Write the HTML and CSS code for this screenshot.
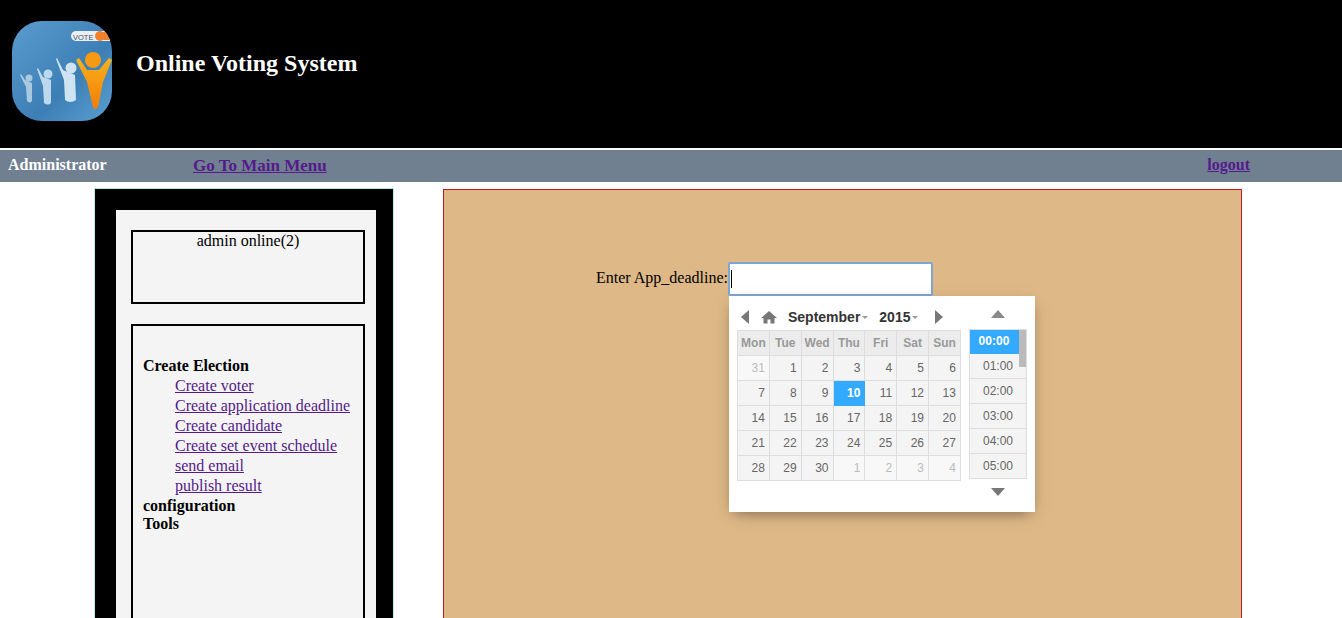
FILE: index.html
```html
<!DOCTYPE html>
<html lang="en">
<head>
<meta charset="utf-8">
<title>Online Voting System</title>
<link rel="stylesheet" href="styles.css">
</head>
<body>
<header class="banner">
  <svg class="logo" width="100" height="100" viewBox="0 0 100 100">
    <defs>
      <linearGradient id="bg" x1="0" y1="0" x2="1" y2="1"><stop offset="0" stop-color="#5a9ccd"/><stop offset="0.6" stop-color="#3d7fb5"/><stop offset="1" stop-color="#5a9fd2"/></linearGradient>
      <linearGradient id="or" x1="0" y1="0" x2="0" y2="1"><stop offset="0" stop-color="#f7b21c"/><stop offset="1" stop-color="#f57c05"/></linearGradient>
      <clipPath id="sq"><rect width="100" height="100" rx="30"/></clipPath>
    </defs>
    <g clip-path="url(#sq)">
      <rect width="100" height="100" fill="url(#bg)"/>
      <rect x="59" y="10" width="50" height="10" rx="5" fill="#e9eff3"/>
      <text x="61" y="18.5" class="logo-text">VOTE</text>
      <circle cx="88" cy="15" r="5" fill="#f0802a"/>
      <rect x="88" y="11" width="14" height="8" fill="#f0802a"/>
      <g fill="#a9c9e0"><circle cx="17" cy="57" r="3.5"/><path d="M9 53l4 6 7 3v18q-2 3-5 0l-1-14-6-12z"/></g>
      <g fill="#bdd8ea"><circle cx="36" cy="53" r="4.5"/><path d="M26 47l5 9 8 3v23q-3 3-7 0l-1-17-6-17z"/></g>
      <g fill="#cfe3f1"><circle cx="59" cy="47" r="5.5"/><path d="M45 37l6 12 12 5 1 25q-6 4-11 0l-1-20-8-21z"/></g>
      <circle cx="81" cy="39" r="8" fill="#f59a12"/>
      <path d="M64 39l3-2 8 12h12l10-12 3 2-9 22-5 25q-3 4-5 0l-6-25z" fill="url(#or)"/>
    </g>
  </svg>
  <h1 class="title">Online Voting System</h1>
</header>
<nav class="navbar">
  <b class="role">Administrator</b>
  <a class="nav-link main-link" href="#">Go To Main Menu</a>
  <a class="nav-link logout" href="#">logout</a>
</nav>
<div class="content">
  <aside class="sidebar">
    <div class="sidebar-inner">
      <div class="online-box">admin online(2)</div>
      <div class="menu-box">
        <div class="menu-head">Create Election</div>
        <ul class="menu-list">
          <li><a href="#">Create voter</a></li>
          <li><a href="#">Create application deadline</a></li>
          <li><a href="#">Create candidate</a></li>
          <li><a href="#">Create set event schedule</a></li>
          <li><a href="#">send email</a></li>
          <li><a href="#">publish result</a></li>
        </ul>
        <div class="menu-head tight">configuration</div>
        <div class="menu-head tight">Tools</div>
      </div>
    </div>
  </aside>
  <main class="panel">
    <form class="deadline-form">
      <label class="deadline-label" for="deadline">Enter App_deadline:</label>
      <div class="picker-anchor">
        <div class="deadline-input" id="deadline"><span class="caret"></span></div>
        <div class="picker">
          <div class="cal">
            <div class="cal-head">
              <svg class="ico" width="9" height="14" viewBox="0 0 9 14"><path d="M8 0v14L0 7z" fill="#777"/></svg>
              <svg class="ico home" width="16" height="14" viewBox="0 0 16 14"><path d="M8 1L0 8h2.500v5.500h4V9.500h3v4h4V8H16z" fill="#777"/></svg>
              <span class="month">September<i class="mini"></i></span>
              <span class="year">2015<i class="mini"></i></span>
              <svg class="ico next" width="9" height="14" viewBox="0 0 9 14"><path d="M1 0v14l8-7z" fill="#777"/></svg>
            </div>
            <table class="days">
              <thead><tr><th>Mon</th><th>Tue</th><th>Wed</th><th>Thu</th><th>Fri</th><th>Sat</th><th>Sun</th></tr></thead>
              <tbody>
                <tr><td class="off">31</td><td>1</td><td>2</td><td>3</td><td>4</td><td>5</td><td>6</td></tr>
                <tr><td>7</td><td>8</td><td>9</td><td class="sel">10</td><td>11</td><td>12</td><td>13</td></tr>
                <tr><td>14</td><td>15</td><td>16</td><td>17</td><td>18</td><td>19</td><td>20</td></tr>
                <tr><td>21</td><td>22</td><td>23</td><td>24</td><td>25</td><td>26</td><td>27</td></tr>
                <tr><td>28</td><td>29</td><td>30</td><td class="off">1</td><td class="off">2</td><td class="off">3</td><td class="off">4</td></tr>
              </tbody>
            </table>
          </div>
          <div class="times">
            <svg class="tri" width="14" height="8" viewBox="0 0 14 8"><path d="M7 0l7 8H0z" fill="#888"/></svg>
            <div class="time-list">
              <div class="time sel">00:00</div>
              <div class="time">01:00</div>
              <div class="time">02:00</div>
              <div class="time">03:00</div>
              <div class="time">04:00</div>
              <div class="time">05:00</div>
              <span class="thumb"></span>
            </div>
            <svg class="tri down" width="14" height="8" viewBox="0 0 14 8"><path d="M0 0h14L7 8z" fill="#777"/></svg>
          </div>
        </div>
      </div>
    </form>
  </main>
</div>
</body>
</html>
```
FILE: styles.css
```css
* { box-sizing: border-box; }
html, body { height: 618px; overflow: hidden; }
body { margin: 0; background: #fff; font-family: "Liberation Serif", "Times New Roman", serif; font-size: 16px; color: #000; }
a { color: #551a8b; }

.banner { height: 148px; background: #000; display: flex; align-items: center; padding: 0 0 6px 12px; gap: 24px; }
.logo { flex: none; margin-top: 0; }
.logo-text { font-family: "Liberation Sans", sans-serif; font-size: 7.500px; fill: #44525c; }
.title { margin: 0 0 16px; font-size: 24px; line-height: 28px; color: #fff; font-weight: bold; }

.navbar { margin-top: 2px; height: 32px; background: #708090; display: flex; align-items: flex-start; padding: 6px 92px 0 8px; font-size: 16px; line-height: 18px; }
.role { color: #fff; width: 185px; flex: none; }
.nav-link { font-weight: bold; }
.main-link { position: relative; top: 1px; font-size: 17px; }
.logout { margin-left: auto; }

.content { display: flex; align-items: flex-start; padding: 6px 100px 0 94px; }
.sidebar { width: 300px; height: 500px; flex: none; background: #000; border: 1px solid #aeeee4; border-bottom: 0; padding: 21px 17px 0 21px; }
.sidebar-inner { background: #f4f4f4; height: 480px; padding: 20px 11px 0 15px; }
.online-box { height: 74px; border: 2px solid #000; text-align: center; line-height: 18px; }
.menu-box { margin-top: 20px; height: 400px; border: 2px solid #000; padding: 30px 10px 0 10px; }
.menu-head { font-weight: bold; line-height: 20px; }
.menu-head.tight { line-height: 18px; }
.menu-list { list-style: none; margin: 0 0 1px; padding: 0 0 0 32px; line-height: 20px; }

.panel { width: 799px; height: 500px; margin: 1px 0 0 49px; flex: none; background: #deb887; border: 1px solid #c0181c; border-bottom: 0; }
.deadline-form { display: flex; align-items: flex-start; padding: 72px 0 0 152px; }
.deadline-label { line-height: 18px; margin-top: 7px; }
.picker-anchor { position: relative; }
.deadline-input { width: 205px; height: 34px; background: #fff; border: 2px solid #7ea6d3; border-radius: 2px; padding: 6px 0 0 1px; }
.caret { display: block; width: 1px; height: 18px; background: #000; }

.picker { position: absolute; left: 1px; top: 34px; width: 306px; height: 216px; background: #fff; box-shadow: 0 5px 15px -5px rgba(0, 0, 0, 0.5); padding: 8px; display: flex; gap: 8px; font-family: "Liberation Sans", Arial, sans-serif; font-size: 12px; color: #666; }
.cal { width: 224px; flex: none; }
.cal-head { height: 26px; display: flex; align-items: center; color: #333; font-weight: bold; }
.ico { flex: none; }
.cal-head .ico:first-child { margin-left: 4px; }
.home { margin-left: 11px; }
.month { margin-left: 11px; font-size: 14px; }
.year { margin-left: 11px; font-size: 14px; }
.mini { display: inline-block; margin-left: 2px; vertical-align: 3px; border: 3px solid transparent; border-top-color: #999; border-bottom: 0; }
.next { margin-left: 16px; }

.days { width: 224px; height: 150px; table-layout: fixed; border-collapse: collapse; }
.days th, .days td { border: 1px solid #ddd; padding: 0 4px 0 0; text-align: right; background: #f4f4f4; }
.days th { height: 25px; padding: 0; text-align: center; color: #999; background: #ececec; font-weight: bold; }
.days td { height: 25px; }
.days td.off { color: #bbb; background: #f8f8f8; }
.days td.sel { background: #33aaff; color: #fff; font-weight: bold; border-color: #33aaff; }

.times { width: 58px; flex: none; display: flex; flex-direction: column; align-items: center; }
.tri { flex: none; margin: 6px 0 11px; }
.tri.down { margin: 9px 0 0; }
.time-list { position: relative; width: 58px; height: 150px; border: 1px solid #ddd; background: #f4f4f4; overflow: hidden; }
.time { height: 25px; border-bottom: 1px solid #ddd; line-height: 24px; text-align: center; }
.time.sel { background: #33aaff; color: #fff; font-weight: bold; margin: -1px 7px 0 -1px; height: 25px; border-bottom: 0; }
.thumb { position: absolute; right: 0; top: 0; width: 7px; height: 37px; background: #bbb; }
```
